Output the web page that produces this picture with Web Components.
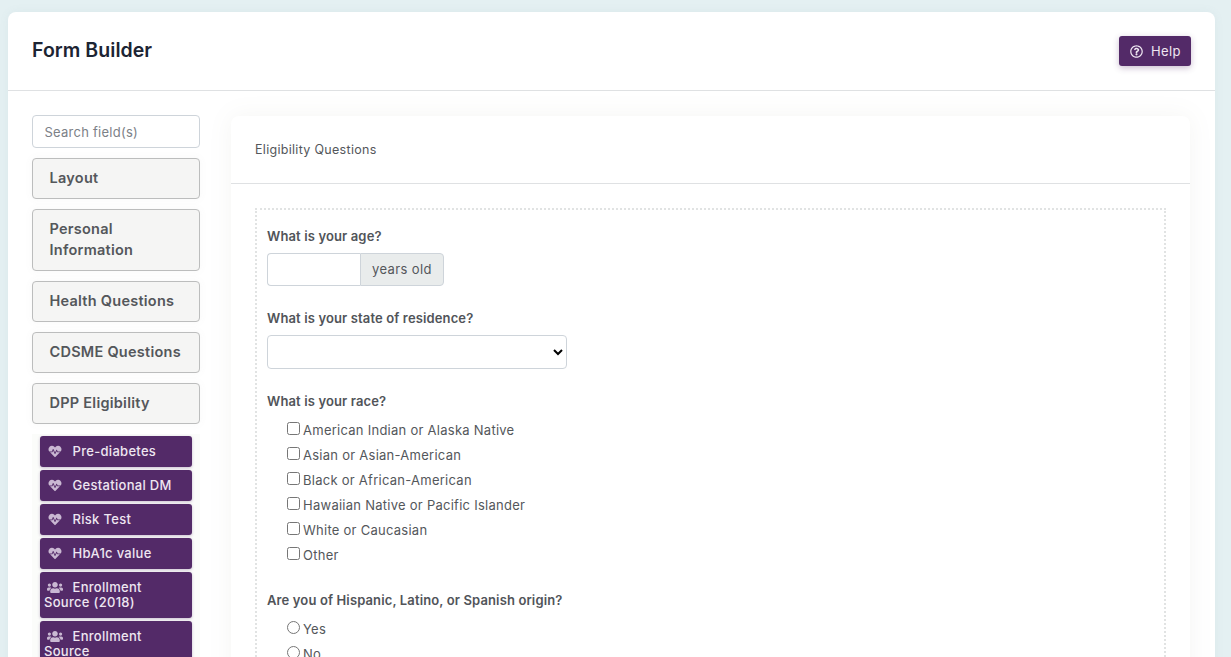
<!DOCTYPE html>
<html>
<head>
<meta charset="utf-8">
<title>Form Builder</title>
<style>
  html, body { margin: 0; height: 657px; overflow: hidden; }
  body { background: #e4f0f2; font-family: Inter, "Liberation Sans", sans-serif; font-size: 13px; color: #515459; }
</style>
</head>
<body>

<fb-page>
  <fb-header slot="header" title="Form Builder"></fb-header>

  <fb-palette slot="palette">
    <fb-group>Layout</fb-group>
    <fb-group>Personal Information</fb-group>
    <fb-group>Health Questions</fb-group>
    <fb-group>CDSME Questions</fb-group>
    <fb-group>DPP Eligibility</fb-group>
    <fb-chips>
      <fb-chip icon="heart">Pre-diabetes</fb-chip>
      <fb-chip icon="heart">Gestational DM</fb-chip>
      <fb-chip icon="heart">Risk Test</fb-chip>
      <fb-chip icon="heart">HbA1c value</fb-chip>
      <fb-chip icon="users">Enrollment Source (2018)</fb-chip>
      <fb-chip icon="users">Enrollment Source</fb-chip>
    </fb-chips>
  </fb-palette>

  <fb-panel slot="panel" heading="Eligibility Questions">
    <fb-question label="What is your age?">
      <fb-age-input></fb-age-input>
    </fb-question>
    <fb-question label="What is your state of residence?">
      <fb-state-select></fb-state-select>
    </fb-question>
    <fb-question label="What is your race?" tight>
      <fb-option>American Indian or Alaska Native</fb-option>
      <fb-option>Asian or Asian-American</fb-option>
      <fb-option>Black or African-American</fb-option>
      <fb-option>Hawaiian Native or Pacific Islander</fb-option>
      <fb-option>White or Caucasian</fb-option>
      <fb-option>Other</fb-option>
    </fb-question>
    <fb-question label="Are you of Hispanic, Latino, or Spanish origin?" tight>
      <fb-option type="radio">Yes</fb-option>
      <fb-option type="radio">No</fb-option>
    </fb-question>
  </fb-panel>
</fb-page>

<script>
const ICONS = {
  heart: ['0 0 512 512', 'M320.2 243.8l-49.7 99.4c-6 12.1-23.4 11.7-28.9-.6l-56.9-126.3-30 71.7H60.6l182.5 186.5c7.1 7.3 18.6 7.3 25.7 0L451.4 288H342.3l-22.1-44.2zM473.7 73.9l-2.4-2.5c-51.5-52.6-135.8-52.6-187.4 0L256 100l-27.9-28.5c-51.5-52.7-135.9-52.7-187.4 0l-2.4 2.4C-10.4 123.7-12.5 203 31 256h102.4l35.9-86.2c5.4-12.9 23.6-13.2 29.4-.4l58.2 129.3 49-97.9c5.9-11.8 22.7-11.8 28.6 0l27.6 55.2H481c43.5-53 41.4-132.3-7.3-182.1z'],
  users: ['0 0 640 512', 'M96 224c35.3 0 64-28.7 64-64s-28.7-64-64-64-64 28.7-64 64 28.7 64 64 64zm448 0c35.3 0 64-28.7 64-64s-28.7-64-64-64-64 28.7-64 64 28.7 64 64 64zm32 32h-64c-17.6 0-33.5 7.1-45.1 18.6 40.3 22.1 68.9 62 75.1 109.4h66c17.7 0 32-14.3 32-32v-32c0-35.3-28.7-64-64-64zm-256 0c61.9 0 112-50.1 112-112S381.9 32 320 32 208 82.1 208 144s50.1 112 112 112zm76.8 32h-8.3c-20.8 10-43.9 16-68.5 16s-47.6-6-68.5-16h-8.3C179.6 288 128 339.6 128 403.2V432c0 26.5 21.5 48 48 48h288c26.5 0 48-21.5 48-48v-28.8c0-63.6-51.6-115.2-115.2-115.2zm-223.7-13.4C161.5 263.1 145.6 256 128 256H64c-35.3 0-64 28.7-64 64v32c0 17.7 14.3 32 32 32h65.9c6.3-47.4 34.9-87.3 75.2-109.4z'],
  help: ['0 0 512 512', 'M256 8C119 8 8 119.08 8 256c0 137 111 248 248 248s248-111 248-248C504 119.08 393 8 256 8zm0 448c-110.53 0-200-89.47-200-200 0-110.5 89.47-200 200-200 110.53 0 200 89.5 200 200 0 110.53-89.47 200-200 200zm107.24-255.2c0 67.05-72.42 68.08-72.42 92.86V300c0 6.63-5.37 12-12 12h-45.64c-6.63 0-12-5.37-12-12v-8.66c0-35.74 27.1-50.03 47.58-61.51 17.56-9.85 28.32-16.55 28.32-29.58 0-17.2-21.95-28.62-39.7-28.62-23.15 0-33.83 10.96-48.85 29.91-4.05 5.11-11.44 6.06-16.64 2.12l-27.82-21.1c-5.11-3.87-6.25-11.07-2.64-16.37C184.8 131.49 214.94 112 261.79 112c49.08 0 101.45 38.31 101.45 88.8zM298 368c0 23.16-18.84 42-42 42s-42-18.84-42-42 18.84-42 42-42 42 18.84 42 42z']
};
const iconSvg = (name, cls) => `<svg class="${cls}" viewBox="${ICONS[name][0]}" aria-hidden="true"><path fill="currentColor" d="${ICONS[name][1]}"></path></svg>`;

// small helper so each element below only has to give its markup
const define = (tag, render) => customElements.define(tag, class extends HTMLElement {
  constructor() {
    super();
    this.attachShadow({ mode: 'open' });
  }
  connectedCallback() {
    this.shadowRoot.innerHTML = render(this);
  }
});

define('fb-page', () => `
  <style>
    :host { display: block; margin: 12px 16px 0 8px; background: #fff; border-radius: 8px 8px 0 0; box-shadow: 0 0 10px rgba(120,140,150,.08); }
    .body { display: grid; grid-template-columns: 168px 959px; column-gap: 31px; padding: 24px 24px 0; }
  </style>
  <slot name="header"></slot>
  <div class="body">
    <div><slot name="palette"></slot></div>
    <div><slot name="panel"></slot></div>
  </div>`);

define('fb-header', el => `
  <style>
    :host { display: flex; align-items: center; justify-content: space-between; height: 78px; padding: 0 24px; border-bottom: 1px solid #dfe1e3; }
    h1 { margin: 0; font-size: 19.5px; font-weight: 600; color: #1c2433; letter-spacing: .05px; position: relative; top: -1px; }
    button { display: flex; align-items: center; gap: 8px; width: 72px; height: 30px; padding: 0 11px; border: 0; border-radius: 3px; background: #532a68; color: #eee6f1; font: 13px Inter, sans-serif; letter-spacing: .35px; box-shadow: 0 2px 6px rgba(83,42,104,.3); }
    .ic { width: 13px; height: 13px; flex: none; }
  </style>
  <h1>${el.getAttribute('title')}</h1>
  <button>${iconSvg('help', 'ic')}Help</button>`);

define('fb-palette', () => `
  <style>
    :host { display: flex; flex-direction: column; gap: 10px; }
    input { box-sizing: border-box; width: 100%; height: 33px; padding: 0 11.5px; border: 1px solid #ced4da; border-radius: 4px; font: 13px Inter, sans-serif; letter-spacing: .25px; color: #555; background: #fff; outline: 0; }
    input::placeholder { color: #7c8187; opacity: 1; }
  </style>
  <input placeholder="Search field(s)">
  <slot></slot>`);

define('fb-group', () => `
  <style>
    :host { display: block; box-sizing: border-box; padding: 8px 16.5px 10px; background: #f5f5f4; border: 1px solid #bcbdbd; border-radius: 4px; font-size: 14.5px; line-height: 21px; font-weight: 600; color: #54575b; letter-spacing: .25px; box-shadow: 0 0 8px rgba(120,120,120,.05); }
  </style>
  <slot></slot>`);

define('fb-chips', () => `
  <style>
    :host { display: flex; flex-direction: column; gap: 3px; padding: 2px 8px 0; background: #fbfcfa; }
  </style>
  <slot></slot>`);

define('fb-chip', el => `
  <style>
    :host { display: block; box-sizing: border-box; padding: 8px 4px; background: #532a68; border-radius: 3px; color: #eee6f1; font-size: 13px; line-height: 15px; font-weight: 500; letter-spacing: .3px; box-shadow: 0 1px 3px rgba(83,42,104,.3); }
    .ic { display: inline-block; height: 13px; width: 16px; margin: 0 9.5px 0 3px; vertical-align: -2px; color: #c9b8d2; }
  </style>
  ${iconSvg(el.getAttribute('icon'), 'ic')}<slot></slot>`);

define('fb-panel', el => `
  <style>
    :host { display: block; margin-top: 1px; background: #fff; border-radius: 8px 8px 0 0; box-shadow: 0 0 24px rgba(130,130,100,.08); padding-bottom: 40px; }
    header { display: flex; align-items: center; height: 67px; padding: 0 24px; border-bottom: 1px solid #dfe1e3; font-size: 12.5px; letter-spacing: .3px; color: #54575b; }
    .drop { margin: 24px 24px 0; padding: 17px 10px; border: 2px dotted #e1e3e3; }
  </style>
  <header>${el.getAttribute('heading')}</header>
  <div class="drop"><slot></slot></div>`);

define('fb-question', el => `
  <style>
    :host { display: block; margin-bottom: ${el.hasAttribute('tight') ? 24 : 23}px; }
    label { display: block; margin-bottom: ${el.hasAttribute('tight') ? 7 : 8}px; font-size: 13px; line-height: 18px; font-weight: 600; color: #515459; letter-spacing: .13px; }
  </style>
  <label>${el.getAttribute('label')}</label>
  <slot></slot>`);

define('fb-age-input', () => `
  <style>
    :host { display: flex; width: 177px; height: 33px; }
    input { box-sizing: border-box; width: 93px; height: 100%; border: 1px solid #ced4da; border-right: 0; border-radius: 4px 0 0 4px; outline: 0; }
    span { flex: 1; display: flex; align-items: center; justify-content: center; box-sizing: border-box; padding-bottom: 1px; background: #e9ecec; border: 1px solid #ced4da; border-radius: 0 4px 4px 0; font-size: 13px; letter-spacing: .4px; color: #54575b; }
  </style>
  <input type="text"><span>years old</span>`);

define('fb-state-select', () => `
  <style>
    :host { display: block; width: 300px; }
    select { display: block; box-sizing: border-box; width: 100%; height: 34px; border: 1px solid #ced4da; border-radius: 4px; background: #fff; outline: 0; }
  </style>
  <select><option></option></select>`);

define('fb-option', el => `
  <style>
    :host { display: flex; align-items: center; height: 25px; padding-left: 20px; font-size: 13px; letter-spacing: .26px; color: #54575b; }
    input { width: 13px; height: 13px; margin: 0 3px 3px 0; flex: none; }
  </style>
  <input type="${el.getAttribute('type') || 'checkbox'}"><slot></slot>`);
</script>
</body>
</html>
